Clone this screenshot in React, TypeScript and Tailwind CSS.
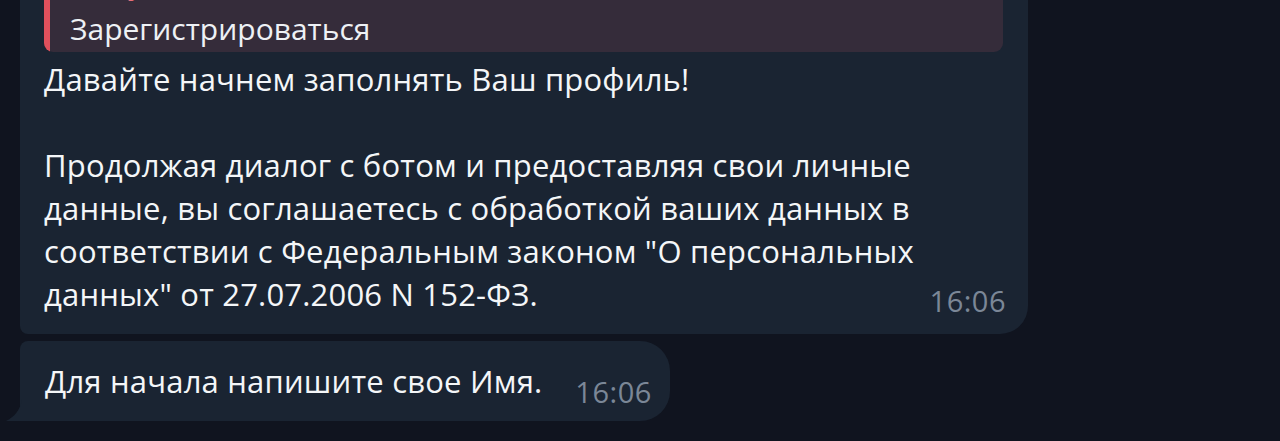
import React from "react";

const font = { fontFamily: '"Open Sans", "Noto Sans", sans-serif' };

export default function App() {
  return (
    <div
      className="h-[441px] w-[1280px] overflow-hidden bg-[#10141f] text-white"
      style={font}
    >
      <div className="flex flex-col gap-[7px] pl-[20px]">
        {/* first message, scrolled partly off the top */}
        <div className="-mt-[30px] w-[1008px] rounded-t-[28px] rounded-br-[28px] rounded-bl-[8px] bg-[#1a2432] pb-[18px] pl-[24px] pr-[25px] pt-[6px]">
          <div className="flex h-[76px] overflow-hidden rounded-[9px] bg-[#352c3a]">
            <div className="w-[6px] shrink-0 rounded-l-[9px] bg-[#e0505c]" />
            <div className="flex flex-col pl-[20px]">
              <span className="-mt-[8px] text-[30px] leading-[30px] text-[#e8707a]">
                Бот учёта
              </span>
              <span className="mt-[14px] text-[30px] leading-[34px] text-[#eef1f5]">
                Зарегистрироваться
              </span>
            </div>
          </div>
          <div className="relative mt-[6px] text-[31px] leading-[43px] tracking-[0.2px] text-[#f4f6f8]">
            <p>Давайте начнем заполнять Ваш профиль!</p>
            <p className="mt-[43px]">
              Продолжая диалог с ботом и предоставляя свои личные
              <br />
              данные, вы соглашаетесь с обработкой ваших данных в
              <br />
              соответствии с Федеральным законом "О персональных
              <br />
              данных" от 27.07.2006 N 152-ФЗ.
            </p>
            <span className="absolute bottom-[-6px] right-[-3px] text-[29px] tracking-[0.5px] text-[#7b8797]">
              16:06
            </span>
          </div>
        </div>

        {/* second message with tail */}
        <div className="relative flex h-[80px] w-fit items-start rounded-tl-[8px] rounded-tr-[30px] rounded-br-[30px] bg-[#1a2432] pl-[25px] pr-[18px] pt-[19px]">
          <svg
            className="absolute bottom-0 left-[-14px]"
            width="16"
            height="22"
            viewBox="0 0 16 22"
          >
            <path d="M16 0 V22 H0 C8 18 14 12 16 0 Z" fill="#1a2432" />
          </svg>
          <span className="text-[31px] leading-[43px] tracking-[0.2px] text-[#f4f6f8]">
            Для начала напишите свое Имя.
          </span>
          <span className="relative top-[10px] ml-[33px] text-[29px] leading-[43px] tracking-[0.5px] text-[#7b8797]">
            16:06
          </span>
        </div>
      </div>
    </div>
  );
}
